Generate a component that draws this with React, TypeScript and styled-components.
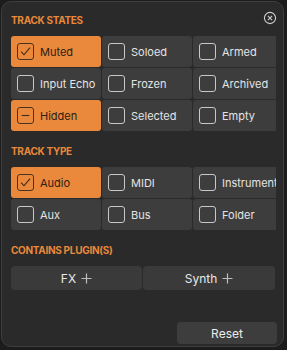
import React from "react";
import styled, { createGlobalStyle } from "styled-components";

const Global = createGlobalStyle`
  html, body { margin: 0; padding: 0; background: #1c1c1c; }
  body { font-family: Inter, "Noto Sans", sans-serif; }
`;

const Page = styled.div`
  width: 287px;
  height: 350px;
  padding: 1px 0 0 1px;
  box-sizing: border-box;
`;

const Panel = styled.div`
  position: relative;
  width: 283px;
  height: 346px;
  box-sizing: border-box;
  background: #2a2a2a;
  border: 1px solid #3e3e3e;
  border-radius: 10px;
  padding: 10px 6px 0 9px;
  display: flex;
  flex-direction: column;
`;

const Heading = styled.div<{ $top?: number }>`
  color: #e8883a;
  font-size: 10px;
  font-weight: 700;
  letter-spacing: -0.3px;
  line-height: 16px;
  margin-top: ${(p) => p.$top ?? 0}px;
  margin-bottom: 8px;
`;

const Close = styled.button`
  position: absolute;
  top: 9px;
  right: 6px;
  width: 14px;
  height: 14px;
  padding: 0;
  border: none;
  background: none;
  display: flex;
`;

const Grid = styled.div`
  width: 265px;
  overflow: hidden;
  display: grid;
  grid-template-columns: repeat(3, 90px);
  grid-auto-rows: 31px;
  gap: 1px;
`;

const Cell = styled.div<{ $on?: boolean }>`
  display: flex;
  align-items: center;
  gap: 6px;
  padding-left: 6px;
  border-radius: 3px;
  background: ${(p) => (p.$on ? "#ea893b" : "#3d3d3d")};
  color: ${(p) => (p.$on ? "#2a2017" : "#e4e4e4")};
  font-size: 11px;
  white-space: nowrap;
`;

const Box = styled.span<{ $on?: boolean }>`
  flex: none;
  width: 15px;
  height: 15px;
  border-radius: 3px;
  border: 1px solid ${(p) => (p.$on ? "#4a3220" : "#c8c8c8")};
  display: flex;
  align-items: center;
  justify-content: center;
`;

const Buttons = styled.div`
  display: grid;
  grid-template-columns: 131px 132px;
  gap: 1px;
`;

const PlugButton = styled.button`
  height: 24px;
  border: none;
  border-radius: 4px;
  background: #3a3a3a;
  color: #e8e8e8;
  font-family: inherit;
  font-size: 12px;
  display: flex;
  align-items: center;
  justify-content: center;
  gap: 5px;
  padding: 0;
`;

const Footer = styled.div`
  margin-top: auto;
  margin-bottom: 2px;
  display: flex;
  justify-content: flex-end;
`;

const Reset = styled.button`
  width: 100px;
  height: 22px;
  border: none;
  border-radius: 4px;
  background: #3d3d3d;
  color: #ececec;
  font-family: inherit;
  font-size: 12px;
  padding: 0;
`;

type Item = { label: string; on?: boolean; mark?: "check" | "dash" };

const states: Item[] = [
  { label: "Muted", on: true, mark: "check" },
  { label: "Soloed" },
  { label: "Armed" },
  { label: "Input Echo" },
  { label: "Frozen" },
  { label: "Archived" },
  { label: "Hidden", on: true, mark: "dash" },
  { label: "Selected" },
  { label: "Empty" },
];

const types: Item[] = [
  { label: "Audio", on: true, mark: "check" },
  { label: "MIDI" },
  { label: "Instrument" },
  { label: "Aux" },
  { label: "Bus" },
  { label: "Folder" },
];

function Check({ item }: { item: Item }) {
  return (
    <Box $on={item.on}>
      {item.mark === "check" && (
        <svg width="13" height="13" viewBox="0 0 12 12">
          <path d="M2 6.2 L4.6 9 L10.2 2.4" fill="none" stroke="#3a2a1c" strokeWidth="1" />
        </svg>
      )}
      {item.mark === "dash" && (
        <svg width="13" height="13" viewBox="0 0 12 12">
          <path d="M2.5 6 H9.5" stroke="#3a2a1c" strokeWidth="1" />
        </svg>
      )}
    </Box>
  );
}

function Plus() {
  return (
    <svg width="11" height="11" viewBox="0 0 11 11">
      <path d="M5.5 0.5 V10.5 M0.5 5.5 H10.5" stroke="#bdbdbd" strokeWidth="1.2" />
    </svg>
  );
}

function Options({ items }: { items: Item[] }) {
  return (
    <Grid>
      {items.map((it) => (
        <Cell key={it.label} $on={it.on}>
          <Check item={it} />
          {it.label}
        </Cell>
      ))}
    </Grid>
  );
}

export default function App() {
  return (
    <Page>
      <Global />
      <Panel>
        <Close aria-label="close">
          <svg width="14" height="14" viewBox="0 0 14 14">
            <circle cx="7" cy="7" r="5.6" fill="none" stroke="#cfcfcf" strokeWidth="1.1" />
            <path d="M4.9 4.9 L9.1 9.1 M9.1 4.9 L4.9 9.1" stroke="#cfcfcf" strokeWidth="1.1" />
          </svg>
        </Close>
        <Heading>TRACK STATES</Heading>
        <Options items={states} />
        <Heading $top={12}>TRACK TYPE</Heading>
        <Options items={types} />
        <Heading $top={12}>CONTAINS PLUGIN(S)</Heading>
        <Buttons>
          <PlugButton>
            FX <Plus />
          </PlugButton>
          <PlugButton>
            Synth <Plus />
          </PlugButton>
        </Buttons>
        <Footer>
          <Reset>Reset</Reset>
        </Footer>
      </Panel>
    </Page>
  );
}
